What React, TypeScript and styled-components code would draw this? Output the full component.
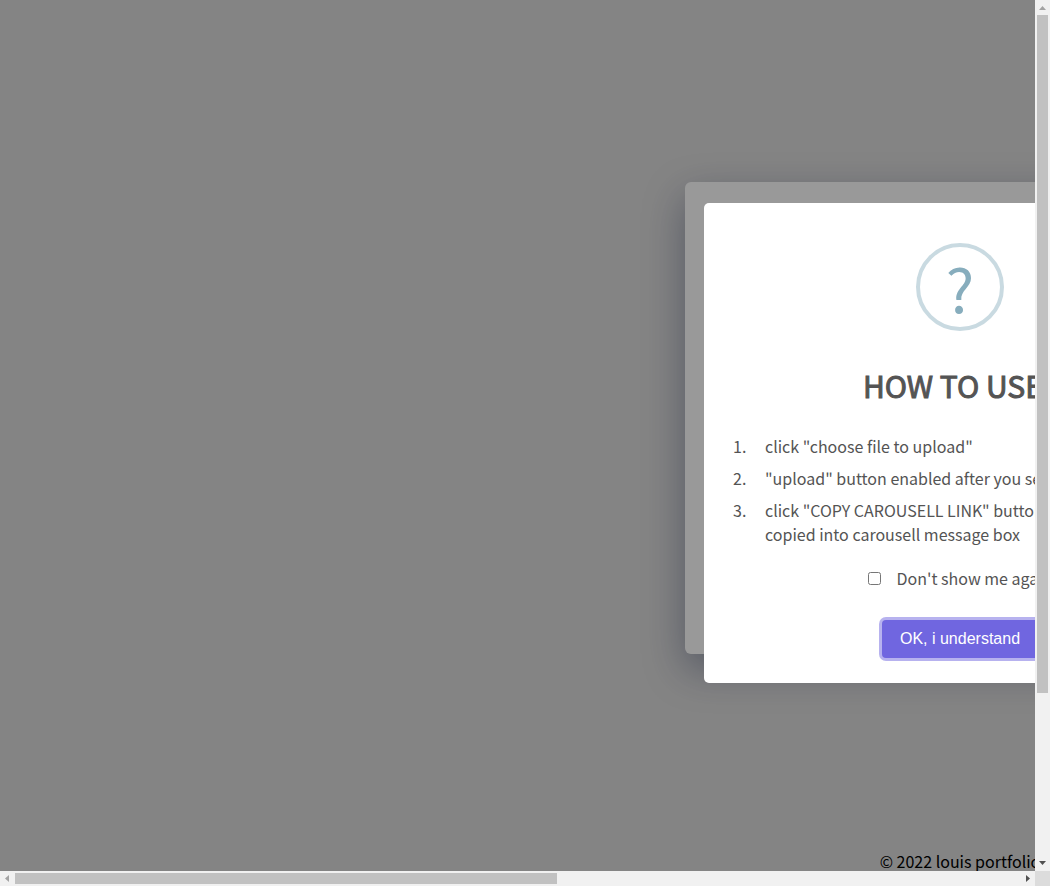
import React from "react";
import styled, { createGlobalStyle } from "styled-components";

const GlobalStyle = createGlobalStyle`
  *, *::before, *::after { box-sizing: border-box; }
  body {
    margin: 0;
    font-family: "Noto Sans CJK JP", "Noto Sans", sans-serif;
    font-size: 16px;
    line-height: 24px;
    color: #000;
  }
`;

const Frame = styled.div`
  display: grid;
  grid-template-columns: minmax(0, 1fr) 15px;
  grid-template-rows: minmax(0, 1fr) 15px;
  height: 100vh;
  background: #dcdcdc;
`;

const Viewport = styled.div`
  overflow: auto;
  scrollbar-width: none;
`;

const Page = styled.div`
  position: relative;
  display: flex;
  flex-direction: column;
  align-items: center;
  min-width: 1920px;
  min-height: 1080px;
  padding-top: 182px;
  background: #dcdcdc;
`;

const UploadCard = styled.main`
  width: 550px;
  min-height: 472px;
  border-radius: 6px;
  background: #fff;
  box-shadow: 0 15px 40px rgba(0, 20, 70, 0.36);
`;

const Footer = styled.footer`
  margin-top: 195px;
`;

const Backdrop = styled.div`
  position: absolute;
  inset: 0;
  background: rgba(0, 0, 0, 0.4);
`;

const DialogArea = styled.div`
  display: flex;
  align-items: center;
  justify-content: center;
  height: 100vh;
`;

const Dialog = styled.section`
  display: flex;
  flex-direction: column;
  align-items: center;
  width: 512px;
  padding: 40px 16px 25px;
  border-radius: 5px;
  background: #fff;
  color: #545454;
`;

const QuestionIcon = styled.div`
  display: flex;
  align-items: center;
  justify-content: center;
  width: 88px;
  height: 88px;
  border: 4px solid #c9dae1;
  border-radius: 50%;
  color: #87adbd;
  font-size: 60px;
  line-height: 80px;
`;

const Title = styled.h2`
  margin: 32px 0 0;
  font-size: 30px;
  line-height: 45px;
  font-weight: 400;
  -webkit-text-stroke: 1px currentColor;
`;

const Steps = styled.ol`
  display: flex;
  flex-direction: column;
  gap: 8px;
  align-self: stretch;
  margin: 26px 0 0;
  padding: 0 13px;
  list-style: none;
  counter-reset: step;
`;

const Step = styled.li`
  display: flex;
  counter-increment: step;
  &::before {
    content: counter(step) ".";
    flex: 0 0 32px;
  }
`;

const CheckLabel = styled.label`
  display: flex;
  align-items: center;
  gap: 16px;
  margin-top: 20px;
`;

const Checkbox = styled.input`
  width: 13px;
  height: 13px;
  margin: 0;
`;

const ConfirmButton = styled.button`
  margin-top: 30px;
  padding: 10px 18px;
  border: 0;
  border-radius: 4px;
  background: #7066e0;
  box-shadow: 0 0 0 3px rgba(112, 102, 224, 0.5);
  color: #fff;
  font-family: "Liberation Sans", Arial, sans-serif;
  font-size: 16px;
  line-height: 18px;
`;

const ScrollTrack = styled.div<{ $vertical?: boolean }>`
  display: flex;
  flex-direction: ${(p) => (p.$vertical ? "column" : "row")};
  background: #f1f1f1;
`;

const ScrollLane = styled.div<{ $vertical?: boolean }>`
  display: flex;
  flex-direction: ${(p) => (p.$vertical ? "column" : "row")};
  flex: 1;
  padding: ${(p) => (p.$vertical ? "0 2px" : "2px 0")};
`;

const ScrollThumb = styled.div<{ $share: number }>`
  flex: 0 0 ${(p) => p.$share}%;
  background: #c1c1c1;
`;

const ScrollCorner = styled.div`
  background: #dcdcdc;
`;

const Arrow = styled.svg`
  display: block;
  flex: none;
  width: 15px;
  height: 15px;
`;

const steps = [
  'click "choose file to upload"',
  '"upload" button enabled after you selected a file',
  'click "COPY CAROUSELL LINK" button, then link will be copied into carousell message box',
];

function ScrollBar({ vertical, share }: { vertical?: boolean; share: number }) {
  return (
    <ScrollTrack $vertical={vertical} aria-hidden="true">
      <Arrow viewBox="0 0 15 15" fill="#a3a3a3">
        <path d={vertical ? "M4 10h7L7.5 6z" : "M9 4v7L5 7.500z"} />
      </Arrow>
      <ScrollLane $vertical={vertical}>
        <ScrollThumb $share={share} />
      </ScrollLane>
      <Arrow viewBox="0 0 15 15" fill="#505050">
        <path d={vertical ? "M4 5h7L7.500 9z" : "M6 4v7l4-3.500z"} />
      </Arrow>
    </ScrollTrack>
  );
}

export default function App() {
  return (
    <>
      <GlobalStyle />
      <Frame>
        <Viewport>
          <Page>
            <UploadCard />
            <Footer>© 2022 louis portfolio</Footer>
            <Backdrop>
              <DialogArea>
                <Dialog role="dialog" aria-modal="true" aria-labelledby="how-to-use">
                  <QuestionIcon aria-hidden="true">?</QuestionIcon>
                  <Title id="how-to-use">HOW TO USE?</Title>
                  <Steps>
                    {steps.map((text) => (
                      <Step key={text}>{text}</Step>
                    ))}
                  </Steps>
                  <CheckLabel>
                    <Checkbox type="checkbox" />
                    Don't show me again
                  </CheckLabel>
                  <ConfirmButton type="button">OK, i understand</ConfirmButton>
                </Dialog>
              </DialogArea>
            </Backdrop>
          </Page>
        </Viewport>
        <ScrollBar vertical share={80.6} />
        <ScrollBar share={53.9} />
        <ScrollCorner />
      </Frame>
    </>
  );
}
